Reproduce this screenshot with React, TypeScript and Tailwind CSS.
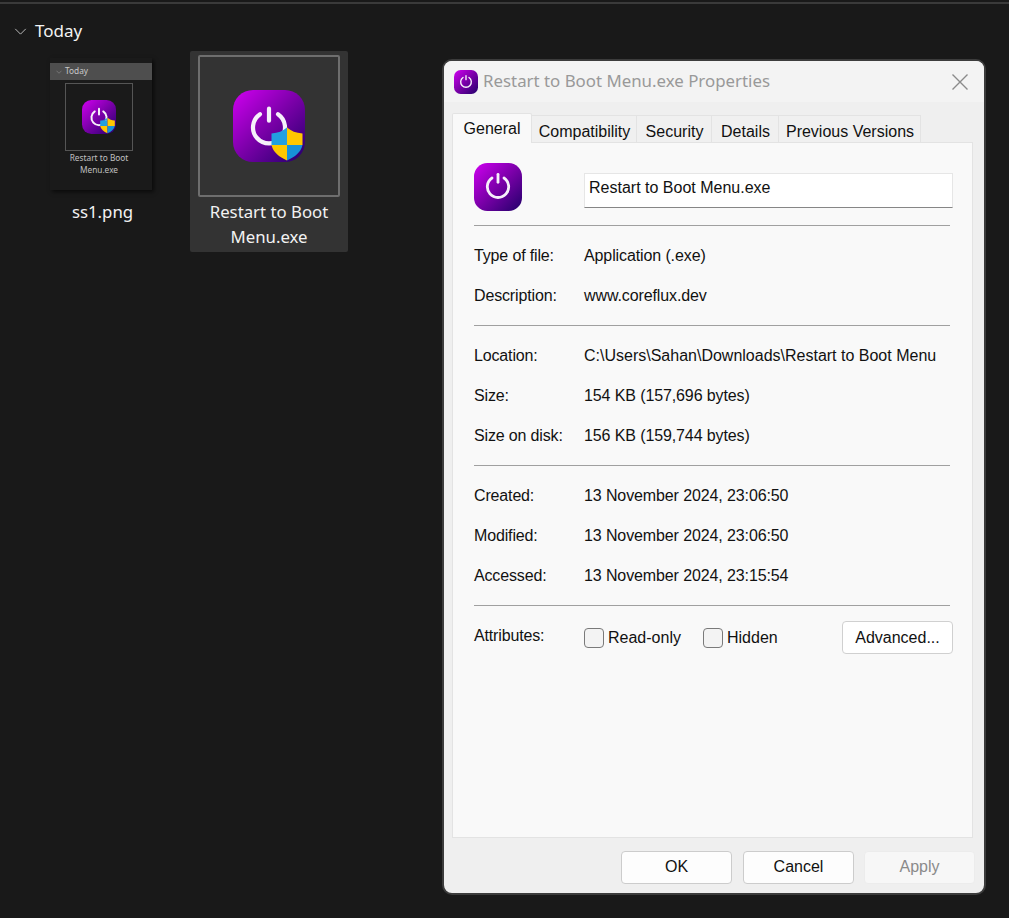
import React from 'react';

const PowerIcon = ({ size, shield, id }: { size: number; shield?: boolean; id: string }) => {
  const cy = shield ? 37.7 : 36;
  const cx = 36;
  return (
    <svg width={size} height={size} viewBox="0 0 72 72" className="shrink-0 block">
      <defs>
        <linearGradient id={id} x1="0" y1="0" x2="1" y2="1">
          <stop offset="0" stopColor="#d000f0" />
          <stop offset="0.5" stopColor="#7a00a8" />
          <stop offset="1" stopColor="#22006a" />
        </linearGradient>
      </defs>
      <rect width="72" height="72" rx="20" fill={`url(#${id})`} />
      <path
        d={`M${cx - 9} ${cy - 13.5} A16 16 0 1 0 ${cx + 9} ${cy - 13.5}`}
        fill="none"
        stroke="#f6f0fa"
        strokeWidth="4.2"
        strokeLinecap="round"
      />
      <path d={`M${cx} ${cy - 19} V${cy - 7}`} stroke="#f6f0fa" strokeWidth="4.2" strokeLinecap="round" />
      {shield && (
        <g>
          <path d="M54 37.5 C50 41 45 43 38.5 43.5 V44 H54 Z" fill="#22a0e0" />
          <path d="M38.5 44 H54 V55 H38.5 Z" fill="#22a0e0" />
          <path d="M54 37.5 C58 41 63 43 69.5 43.5 V55 H54 Z" fill="#ffc800" />
          <path d="M38.5 55 H54 V70.5 C46 67 40 62 38.5 55 Z" fill="#ffc800" />
          <path d="M54 55 H69.5 C68 62 62 67 54 70.5 Z" fill="#1792d8" />
        </g>
      )}
    </svg>
  );
};

const Chevron = ({ className }: { className: string }) => (
  <svg viewBox="0 0 14 8" fill="none" stroke="currentColor" className={className}>
    <path d="M1 1 L7 7 L13 1" strokeWidth="1" />
  </svg>
);

const Row = ({ label, value, tight = true }: { label: string; value: string; tight?: boolean }) => (
  <div className="flex h-10 items-center pt-[2px]">
    <span className="w-[110px] shrink-0 tracking-[-0.15px]">{label}</span>
    <span className={tight ? 'tracking-[-0.11px]' : ''}>{value}</span>
  </div>
);

const Sep = () => <div className="h-px w-[476px] bg-[#a0a0a0]" />;

const tabs = [
  { name: 'Compatibility', w: 'w-[105px]' },
  { name: 'Security', w: 'w-[75px]' },
  { name: 'Details', w: 'w-[67px]' },
  { name: 'Previous Versions', w: 'w-[142px]' },
];

const btn = 'flex h-[33px] w-[111px] items-center justify-center rounded-[4px] border';

export default function App() {
  return (
    <div className="relative h-[918px] w-[1009px] overflow-hidden bg-[#191919] font-['Noto_Sans',sans-serif] text-white">
      <div className="mt-[2px] h-[2px] bg-[#3a3a3a]" />

      {/* Explorer group */}
      <div className="pl-[14px] pt-[16px]">
        <div className="flex h-[22px] items-center gap-[8px] text-[17px] text-[#f2f2f2]">
          <Chevron className="h-[7px] w-[13px] text-[#cfcfcf]" />
          <span>Today</span>
        </div>
        <div className="mt-[9px] flex items-start">
          <div className="ml-[36px] mt-[7px] w-[102px]">
            <div className="h-[132px] w-[102px] bg-[#1a1a1a] pt-[5px] shadow-[2px_2px_4px_rgba(0,0,0,0.6)]">
              <div className="flex h-[17px] items-center gap-[3px] bg-[#4e4e4e] pl-[6px] text-[8.3px] text-[#c8c8c8]">
                <Chevron className="h-[4px] w-[6px] text-[#aaaaaa]" />
                <span>Today</span>
              </div>
              <div className="ml-[15px] mt-[3px] flex h-[68px] w-[68px] items-center justify-center border border-[#555555]">
                <PowerIcon size={34} shield id="g-thumb" />
              </div>
              <div className="ml-[3px] mt-[1px] w-[92px] text-center text-[8.3px] leading-[12px] text-[#c0c0c0]">
                Restart to Boot Menu.exe
              </div>
            </div>
            <div className="ml-[3px] mt-[10px] text-center text-[16.8px] leading-[24px] text-[#f2f2f2]">ss1.png</div>
          </div>

          <div className="ml-[38px] h-[201px] w-[158px] rounded-[2px] bg-[#333333] pt-[4px]">
            <div className="mx-auto flex h-[142px] w-[142px] items-center justify-center rounded-[2px] border-2 border-[#6e6e6e]">
              <PowerIcon size={72} shield id="g-tile" />
            </div>
            <div className="mt-[2px] text-center text-[16.8px] leading-[25px] text-[#f2f2f2]">
              Restart to Boot
              <br />
              Menu.exe
            </div>
          </div>
        </div>
      </div>

      {/* Properties dialog */}
      <div className="absolute left-[442px] top-[59px] flex h-[836px] w-[544px] flex-col overflow-hidden rounded-[10px] border-2 border-[#3c3c3c] bg-[#efefef] font-['Liberation_Sans',sans-serif] text-[16px] text-[#111111]">
        <div className="flex h-[41px] shrink-0 items-center bg-[#f3f3f3] pl-[10px] pr-[16px]">
          <PowerIcon size={24} id="g-title" />
          <span className="mb-[2px] ml-[5px] font-['Noto_Sans',sans-serif] text-[16.85px] text-[#999999]">
            Restart to Boot Menu.exe Properties
          </span>
          <svg viewBox="0 0 16 16" className="ml-auto h-[16px] w-[16px]" stroke="#8a8a8a" strokeWidth="1.4">
            <path d="M0.5 0.5 L15.5 15.5 M15.5 0.5 L0.5 15.5" />
          </svg>
        </div>

        <div className="flex h-[40px] shrink-0 items-end pl-[8px] pt-[10px]">
          <div className="relative z-10 -mb-px flex h-[30px] w-[80px] items-start justify-center rounded-t-[2px] border border-b-0 border-[#e3e3e3] bg-[#f9f9f9] pt-[3px]">
            General
          </div>
          {tabs.map((t) => (
            <div
              key={t.name}
              className={`flex h-[27px] items-center justify-center border border-b-0 border-l-0 border-[#e3e3e3] bg-[#f0f0f0] pl-[1px] pt-[5px] ${t.w}`}
            >
              {t.name}
            </div>
          ))}
        </div>

        <div className="ml-[8px] h-[696px] w-[521px] shrink-0 border border-[#e3e3e3] bg-[#f9f9f9] pl-[21px]">
          <div className="flex pb-[14px] pt-[20px]">
            <PowerIcon size={48} id="g-head" />
            <div className="ml-[62px] mt-[10px] h-[35px] w-[369px] border border-b-[#868686] border-[#e6e6e6] bg-white pl-[4px] pt-[2px]">
              Restart to Boot Menu.exe
            </div>
          </div>
          <Sep />
          <div className="pb-[10px] pt-[9px]">
            <Row label="Type of file:" value="Application (.exe)" />
            <Row label="Description:" value="www.coreflux.dev" />
          </div>
          <Sep />
          <div className="pb-[10px] pt-[9px]">
            <Row label="Location:" value="C:\Users\Sahan\Downloads\Restart to Boot Menu" tight={false} />
            <Row label="Size:" value="154 KB (157,696 bytes)" />
            <Row label="Size on disk:" value="156 KB (159,744 bytes)" />
          </div>
          <Sep />
          <div className="pb-[10px] pt-[9px]">
            <Row label="Created:" value="13 November 2024, 23:06:50" />
            <Row label="Modified:" value="13 November 2024, 23:06:50" />
            <Row label="Accessed:" value="13 November 2024, 23:15:54" />
          </div>
          <Sep />
          <div className="mt-[15px] flex w-[479px] items-center">
            <span className="-mt-[3px] w-[110px] tracking-[-0.15px]">Attributes:</span>
            <span className="h-5 w-5 rounded-[4px] border border-[#7a7a7a] bg-[#f3f3f3]" />
            <span className="ml-[4px] w-[95px]">Read-only</span>
            <span className="h-5 w-5 rounded-[4px] border border-[#7a7a7a] bg-[#f3f3f3]" />
            <span className="ml-[4px]">Hidden</span>
            <div className={`ml-auto border-[#d0d0d0] bg-white ${btn}`}>Advanced...</div>
          </div>
        </div>

        <div className="mt-[13px] flex justify-end gap-[10px] pr-[9px]">
          <div className={`mr-[1px] border-[#cccccc] bg-[#fdfdfd] pb-[1px] ${btn}`}>OK</div>
          <div className={`border-[#cccccc] bg-[#fdfdfd] pb-[1px] ${btn}`}>Cancel</div>
          <div className={`border-[#ececec] bg-[#f7f7f7] pb-[1px] text-[#8a8a8a] ${btn}`}>Apply</div>
        </div>
      </div>
    </div>
  );
}
